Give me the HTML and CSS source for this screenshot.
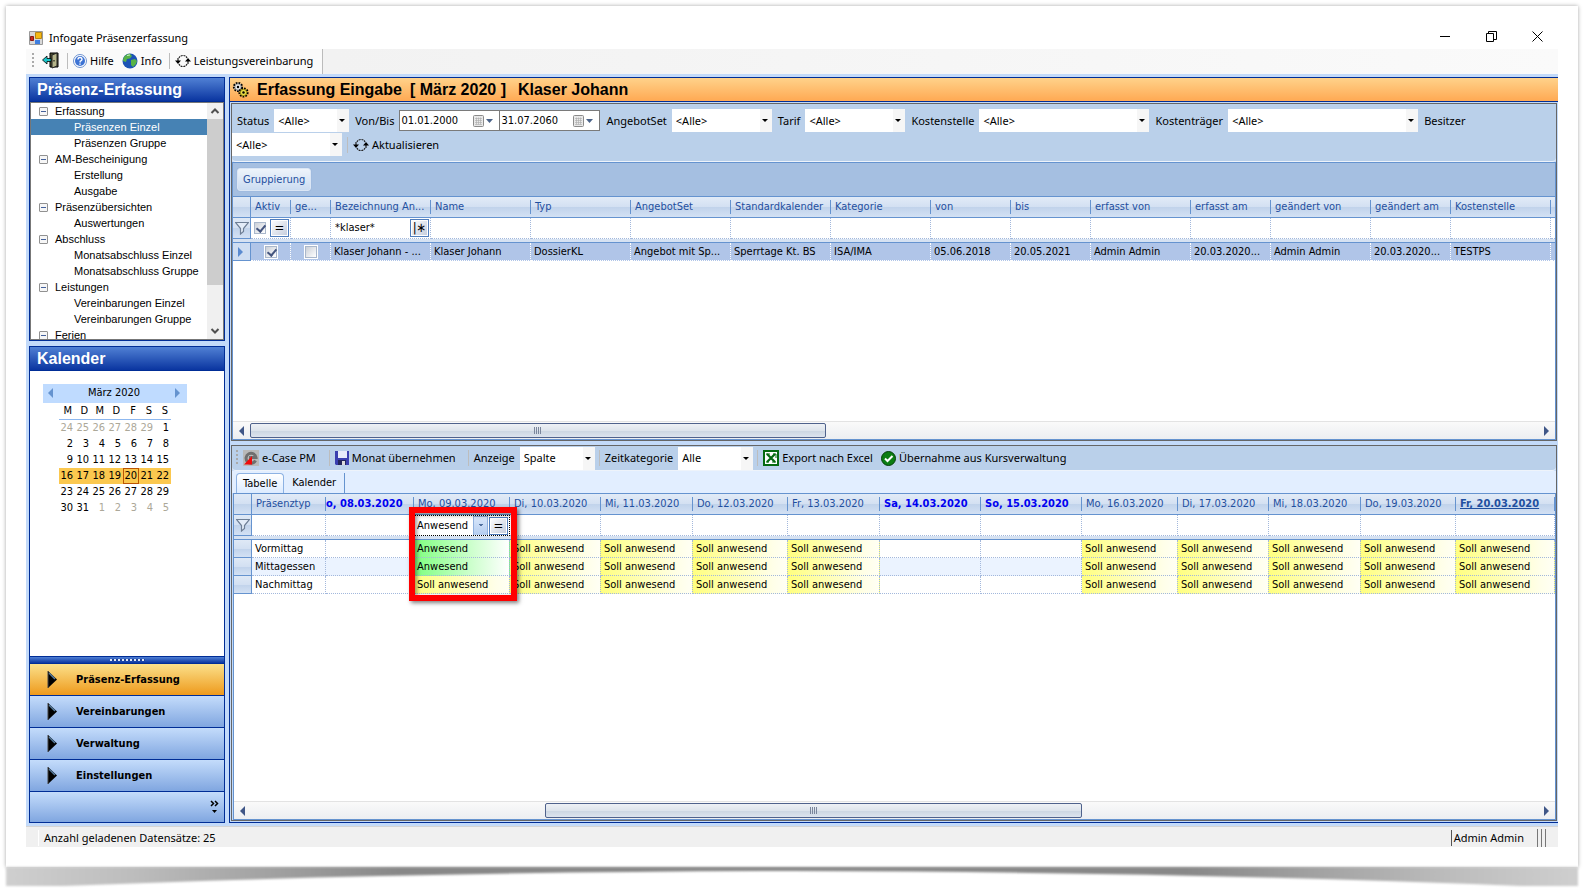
FILE: index.html
```
<!DOCTYPE html>
<html lang="de">
<head>
    <meta charset="UTF-8">
    <meta name="viewport" content="width=device-width, initial-scale=1.0">
    <title>Infogate Präsenzerfassung</title>
    <link rel="stylesheet" href="styles.css">
</head>
<body>
    <!-- shared symbols -->
    <svg class="symbols" aria-hidden="true">
        <symbol id="refresh" viewBox="0 0 16 14">
            <path d="M4 4 Q5 1.5 8 1.5 Q11 1.5 12 4 M12 10 Q11 12.500 8 12.500 Q5 12.500 4 10" fill="none" stroke="#222" stroke-width="1.200" stroke-dasharray="2 .7"/>
            <path d="M3 4v3M13 7v3" stroke="#222" stroke-width="1.200"/>
            <path d="M0 6.500h6L3 10zM10 7.500h6L13 4z" fill="#000"/>
        </symbol>
        <symbol id="nav-arrow" viewBox="0 0 12 20">
            <path d="M1 1 10 9.500 1 18z" fill="#000"/>
            <path d="M2 3 8 9" stroke="#557a9c" stroke-width="1.500"/>
            <path d="M1 1v17" stroke="#444"/>
        </symbol>
        <symbol id="funnel" viewBox="0 0 14 14">
            <path d="M.5 1.500h13L8.500 7.500v3l-3 2.500V7.500z" fill="#e3ecf8" stroke="#6e7f96" stroke-width="1.200"/>
        </symbol>
        <symbol id="cal-button" viewBox="0 0 20 12">
            <rect x=".5" y=".5" width="10" height="11" rx="1" fill="#e9e9e9" stroke="#8a8a8a"/>
            <path d="M2 3.500h7M2 5.500h7M2 7.500h7M2 9.500h7M3.500 2.500v7M5.500 2.500v7M7.500 2.500v7" stroke="#aaa" stroke-width=".6"/>
            <path d="M13 4h7l-3.500 4z" fill="#4a6288"/>
        </symbol>
    </svg>

    <div class="sheet">
        <div class="app">
            <div class="titlebar">
                <svg class="app-icon" viewBox="0 0 14 14">
                    <path fill="#d8d8d8" stroke="#999" d="M.5.5h13v13H.5z"/>
                    <path fill="#f5b914" stroke="#b88612" d="M6.500 1.500h6v6h-6z"/>
                    <path fill="#c8281e" stroke="#8d1810" d="M1.500 5.500h3v4h-3z"/>
                    <path fill="#3f7fe0" d="M6 9h5v4H6z"/>
                </svg>
                <span class="title">Infogate Präsenzerfassung</span>
                <div class="win-buttons">
                    <button aria-label="Minimieren"><svg viewBox="0 0 11 11"><path d="M0 5.500h10"/></svg></button>
                    <button aria-label="Wiederherstellen"><svg viewBox="0 0 11 11"><path d="M.5 2.500h7v8h-7zM2.500 2.500v-2h8v8h-3"/></svg></button>
                    <button aria-label="Schliessen"><svg viewBox="0 0 11 11"><path d="M.5.5l10 10M10.500.5l-10 10"/></svg></button>
                </div>
            </div>

            <div class="menubar">
                <div class="strip">
                    <span class="grip"></span>
                    <button class="tool" aria-label="Beenden">
                        <svg width="18" height="17" viewBox="0 0 18 17">
                            <path d="M8 1h8v14H8z" fill="#4c4c30" stroke="#000"/>
                            <path d="M10 3l5-2v13l-5 2z" fill="#b5b58a" stroke="#222"/>
                            <path d="M12 8v1.500" stroke="#000"/>
                            <path d="M.5 8 5 4v2.500h4v3H5V12z" fill="#19c5c9" stroke="#000" stroke-width=".8"/>
                        </svg>
                    </button>
                    <span class="sep"></span>
                    <button class="tool">
                        <svg width="14" height="14" viewBox="0 0 14 14">
                            <circle cx="7" cy="7" r="6.500" fill="#fff" stroke="#6f93cf"/>
                            <circle cx="7" cy="7" r="5" fill="#3d73d4"/>
                            <path d="M5 5.500Q5 3.500 7 3.500T9 5.500Q9 6.500 7.200 7.300V8.500M7 9.500v1.300" fill="none" stroke="#fff" stroke-width="1.400"/>
                        </svg>
                        Hilfe
                    </button>
                    <button class="tool">
                        <svg width="16" height="16" viewBox="0 0 16 16">
                            <circle cx="8" cy="8" r="7.500" fill="#1c53b5"/>
                            <path d="M2 4Q4 1 8 .8L10 3 8 5.500 5 6 4 9 1 8Q1 6 2 4zM9 7l4-1 2 2-1 3-3 3-2-2z" fill="#57b347"/>
                            <path d="M5 2.500 8 2" stroke="#cdf0c6"/>
                        </svg>
                        Info
                    </button>
                    <span class="sep"></span>
                    <button class="tool"><svg width="16" height="14"><use href="#refresh"/></svg>Leistungsvereinbarung</button>
                </div>
            </div>

            <div class="workspace">
                <aside class="sidebar">
                    <section class="side-panel tree-panel">
                        <h2>Präsenz-Erfassung</h2>
                        <div class="tree-box">
                            <ul class="tree">
                                <li class="root"><i></i>Erfassung</li>
                                <li class="selected">Präsenzen Einzel</li>
                                <li>Präsenzen Gruppe</li>
                                <li class="root"><i></i>AM-Bescheinigung</li>
                                <li>Erstellung</li>
                                <li>Ausgabe</li>
                                <li class="root"><i></i>Präsenzübersichten</li>
                                <li>Auswertungen</li>
                                <li class="root"><i></i>Abschluss</li>
                                <li>Monatsabschluss Einzel</li>
                                <li>Monatsabschluss Gruppe</li>
                                <li class="root"><i></i>Leistungen</li>
                                <li>Vereinbarungen Einzel</li>
                                <li>Vereinbarungen Gruppe</li>
                                <li class="root"><i></i>Ferien</li>
                            </ul>
                            <div class="vscroll">
                                <svg viewBox="0 0 15 16"><path d="M4 10l3.500-3.500L11 10"/></svg>
                                <span class="vthumb"></span>
                                <svg viewBox="0 0 15 16"><path d="M4 6l3.500 3.500L11 6"/></svg>
                            </div>
                        </div>
                    </section>

                    <section class="side-panel calendar-panel">
                        <h2>Kalender</h2>
                        <div class="calendar">
                            <div class="cal-head">
                                <button class="prev" aria-label="Vorheriger Monat"></button>
                                <span>März 2020</span>
                                <button class="next" aria-label="Nächster Monat"></button>
                            </div>
                            <table class="cal-days">
                                <thead>
                                    <tr><th>M</th><th>D</th><th>M</th><th>D</th><th>F</th><th>S</th><th>S</th></tr>
                                </thead>
                                <tbody>
                                    <tr><td class="off">24</td><td class="off">25</td><td class="off">26</td><td class="off">27</td><td class="off">28</td><td class="off">29</td><td>1</td></tr>
                                    <tr><td>2</td><td>3</td><td>4</td><td>5</td><td>6</td><td>7</td><td>8</td></tr>
                                    <tr><td>9</td><td>10</td><td>11</td><td>12</td><td>13</td><td>14</td><td>15</td></tr>
                                    <tr class="week"><td>16</td><td>17</td><td>18</td><td>19</td><td class="today">20</td><td>21</td><td>22</td></tr>
                                    <tr><td>23</td><td>24</td><td>25</td><td>26</td><td>27</td><td>28</td><td>29</td></tr>
                                    <tr><td>30</td><td>31</td><td class="off">1</td><td class="off">2</td><td class="off">3</td><td class="off">4</td><td class="off">5</td></tr>
                                </tbody>
                            </table>
                        </div>
                        <div class="splitter"><span></span></div>
                        <nav class="side-nav">
                            <button class="active"><svg><use href="#nav-arrow"/></svg>Präsenz-Erfassung</button>
                            <button><svg><use href="#nav-arrow"/></svg>Vereinbarungen</button>
                            <button><svg><use href="#nav-arrow"/></svg>Verwaltung</button>
                            <button><svg><use href="#nav-arrow"/></svg>Einstellungen</button>
                            <div class="nav-more">
                                <svg width="9" height="14" viewBox="0 0 9 14"><path d="M1 1l2.500 2.500L1 6M5 1l2.500 2.500L5 6" fill="none" stroke="#000" stroke-width="1.500"/><path d="M2 10h5l-2.500 3z"/></svg>
                            </div>
                        </nav>
                    </section>
                </aside>

                <main class="main">
                    <h1>
                        <svg width="17" height="17" viewBox="0 0 17 17">
                            <circle cx="6" cy="6" r="4" fill="#ddd" stroke="#000" stroke-width="2.200" stroke-dasharray="1.600 1.100"/>
                            <circle cx="6" cy="6" r="3.200" fill="#e8e8e8" stroke="#555" stroke-width=".6"/>
                            <circle cx="6" cy="6" r="1.200"/>
                            <circle cx="11.500" cy="11.500" r="4" fill="#e8d21e" stroke="#000" stroke-width="2.200" stroke-dasharray="1.600 1.100"/>
                            <circle cx="11.500" cy="11.500" r="3.200" fill="#efe04a" stroke="#6b6000" stroke-width=".6"/>
                            <circle cx="11.500" cy="11.500" r="1.200"/>
                        </svg>
                        <span>Erfassung Eingabe</span><span>[ März 2020 ]</span><span>Klaser Johann</span>
                    </h1>

                    <section class="pane upper">
                        <div class="filters">
                            <label for="status">Status</label>
                            <span class="combo w75"><select id="status"><option>&lt;Alle&gt;</option></select></span>
                            <label for="von">Von/Bis</label>
                            <span class="dates">
                                <span class="date"><input id="von" type="text" value="01.01.2000"><svg><use href="#cal-button"/></svg></span>
                                <span class="date"><input type="text" aria-label="Bis" value="31.07.2060"><svg><use href="#cal-button"/></svg></span>
                            </span>
                            <label for="set">AngebotSet</label>
                            <span class="combo w100"><select id="set"><option>&lt;Alle&gt;</option></select></span>
                            <label for="tarif">Tarif</label>
                            <span class="combo w100"><select id="tarif"><option>&lt;Alle&gt;</option></select></span>
                            <label for="stelle">Kostenstelle</label>
                            <span class="combo w170"><select id="stelle"><option>&lt;Alle&gt;</option></select></span>
                            <label for="traeger">Kostenträger</label>
                            <span class="combo w190"><select id="traeger"><option>&lt;Alle&gt;</option></select></span>
                            <label for="besitzer">Besitzer</label>
                            <span class="line-break"></span>
                            <span class="combo w110"><select id="besitzer"><option>&lt;Alle&gt;</option></select></span>
                            <span class="sep"></span>
                            <button class="tool"><svg width="16" height="14"><use href="#refresh"/></svg>Aktualisieren</button>
                        </div>
                        <div class="grid-box">
                            <div class="group-bar"><button class="chip">Gruppierung</button></div>
                            <div class="grid-scroll">
                                <table class="grid">
                                    <colgroup>
                                        <col class="c18"><col class="c40"><col class="c40"><col class="c100"><col class="c100"><col class="c100"><col class="c100"><col class="c100"><col class="c100"><col class="c80"><col class="c80"><col class="c100"><col class="c80"><col class="c100"><col class="c80"><col class="c100"><col>
                                    </colgroup>
                                    <thead>
                                        <tr>
                                            <th class="rowhead"></th><th>Aktiv</th><th>ge...</th><th>Bezeichnung An...</th><th>Name</th><th>Typ</th><th>AngebotSet</th><th>Standardkalender</th><th>Kategorie</th><th>von</th><th>bis</th><th>erfasst von</th><th>erfasst am</th><th>geändert von</th><th>geändert am</th><th>Kostenstelle</th><th class="rest"></th>
                                        </tr>
                                    </thead>
                                    <tbody>
                                        <tr class="filter-row">
                                            <td class="rowhead"><svg width="14" height="14"><use href="#funnel"/></svg></td>
                                            <td><div class="filter-cell"><input type="checkbox" aria-label="Filter Aktiv" checked><button class="op">=</button></div></td>
                                            <td></td>
                                            <td><div class="filter-cell"><input type="text" aria-label="Filter Bezeichnung" value="*klaser*"><button class="op">|∗</button></div></td>
                                            <td></td><td></td><td></td><td></td><td></td><td></td><td></td><td></td><td></td><td></td><td></td><td></td><td class="rest"></td>
                                        </tr>
                                        <tr class="band"><td colspan="17"></td></tr>
                                        <tr class="current">
                                            <td class="rowhead"><span class="marker"></span></td>
                                            <td class="center"><input type="checkbox" aria-label="Aktiv" checked></td>
                                            <td class="center"><input type="checkbox" aria-label="gesperrt"></td>
                                            <td>Klaser Johann - ...</td><td>Klaser Johann</td><td>DossierKL</td><td>Angebot mit Sp...</td><td>Sperrtage Kt. BS</td><td>ISA/IMA</td><td>05.06.2018</td><td>20.05.2021</td><td>Admin Admin</td><td>20.03.2020...</td><td>Admin Admin</td><td>20.03.2020...</td><td>TESTPS</td><td class="rest"></td>
                                        </tr>
                                    </tbody>
                                </table>
                            </div>
                            <div class="hscroll">
                                <span class="left"></span>
                                <div class="track"><span class="thumb thumb-upper"></span></div>
                                <span class="right"></span>
                            </div>
                        </div>
                    </section>

                    <section class="pane lower">
                        <div class="toolbar">
                            <span class="grip"></span>
                            <button class="tool">
                                <svg width="16" height="16" viewBox="0 0 16 16">
                                    <path d="M0 0h16v16H0z" fill="#b9b9b9"/>
                                    <path d="M12.500 10.500A5 5 0 1 1 13 7.500H6" fill="none" stroke="#6f6f6f" stroke-width="3"/>
                                    <path d="M9 6v8.500H1z" fill="#f00a0a"/>
                                </svg>
                                e-Case PM
                            </button>
                            <span class="sep"></span>
                            <button class="tool">
                                <svg width="14" height="14" viewBox="0 0 14 14">
                                    <path d="M0 0h14v14H1L0 13z" fill="#3a3fb0"/>
                                    <path d="M3 0h9v7H3z" fill="#e6ebfa"/>
                                    <path d="M3 9h8v5H3z" fill="#23255c"/>
                                    <path d="M7 10h3v4H7z" fill="#dcdcdc"/>
                                </svg>
                                Monat übernehmen
                            </button>
                            <span class="sep"></span>
                            <label for="anzeige">Anzeige</label>
                            <span class="combo w75"><select id="anzeige"><option>Spalte</option></select></span>
                            <span class="sep"></span>
                            <label for="zeit">Zeitkategorie</label>
                            <span class="combo w75"><select id="zeit"><option>Alle</option></select></span>
                            <span class="sep"></span>
                            <button class="tool">
                                <svg width="16" height="16" viewBox="0 0 16 16">
                                    <path d="M1 1h14v14H1z" fill="#fff" stroke="#05690f" stroke-width="2"/>
                                    <path d="M4 4l8 8M12 4l-8 8" stroke="#05690f" stroke-width="2.200"/>
                                    <path d="M3 4h4M9 12h4M3 12h3M10 4h3v4" fill="none" stroke="#05690f"/>
                                </svg>
                                Export nach Excel
                            </button>
                            <button class="tool">
                                <svg width="15" height="15" viewBox="0 0 15 15">
                                    <circle cx="7.500" cy="7.500" r="7" fill="#0b7d12" stroke="#053d08"/>
                                    <path d="M4 7.500 6.500 10 11.500 5" fill="none" stroke="#fff" stroke-width="2"/>
                                </svg>
                                Übernahme aus Kursverwaltung
                            </button>
                        </div>
                        <div class="tabs">
                            <button class="tab active">Tabelle</button>
                            <button class="tab">Kalender</button>
                        </div>
                        <div class="grid-box presence">
                            <div class="grid-scroll">
                                <table class="grid">
                                    <colgroup>
                                        <col class="c18"><col class="c74"><col class="c88"><col class="c96"><col class="c91"><col class="c92"><col class="c95"><col class="c92"><col class="c101"><col class="c101"><col class="c96"><col class="c91"><col class="c92"><col class="c95"><col>
                                    </colgroup>
                                    <thead>
                                        <tr>
                                            <th class="rowhead"></th><th>Präsenztyp</th>
                                            <th class="weekend cut">o, 08.03.2020</th>
                                            <th class="marked">Mo, 09.03.2020<span class="highlight"></span></th>
                                            <th>Di, 10.03.2020</th><th>Mi, 11.03.2020</th><th>Do, 12.03.2020</th><th>Fr, 13.03.2020</th>
                                            <th class="weekend">Sa, 14.03.2020</th><th class="weekend">So, 15.03.2020</th>
                                            <th>Mo, 16.03.2020</th><th>Di, 17.03.2020</th><th>Mi, 18.03.2020</th><th>Do, 19.03.2020</th>
                                            <th class="now">Fr, 20.03.2020</th>
                                        </tr>
                                    </thead>
                                    <tbody>
                                        <tr class="filter-row">
                                            <td class="rowhead"><svg width="14" height="14"><use href="#funnel"/></svg></td>
                                            <td></td><td></td>
                                            <td class="editing"><div class="filter-cell"><span class="drop"><select aria-label="Filter Mo, 09.03.2020"><option>Anwesend</option></select></span><button class="op">=</button></div></td>
                                            <td></td><td></td><td></td><td></td><td></td><td></td><td></td><td></td><td></td><td></td><td></td>
                                        </tr>
                                        <tr class="band"><td colspan="15"></td></tr>
                                        <tr>
                                            <td class="rowhead"></td><td>Vormittag</td><td></td><td class="ist">Anwesend</td><td class="soll">Soll anwesend</td><td class="soll">Soll anwesend</td><td class="soll">Soll anwesend</td><td class="soll">Soll anwesend</td><td></td><td></td><td class="soll">Soll anwesend</td><td class="soll">Soll anwesend</td><td class="soll">Soll anwesend</td><td class="soll">Soll anwesend</td><td class="soll">Soll anwesend</td>
                                        </tr>
                                        <tr class="alt">
                                            <td class="rowhead"></td><td>Mittagessen</td><td></td><td class="ist">Anwesend</td><td class="soll">Soll anwesend</td><td class="soll">Soll anwesend</td><td class="soll">Soll anwesend</td><td class="soll">Soll anwesend</td><td></td><td></td><td class="soll">Soll anwesend</td><td class="soll">Soll anwesend</td><td class="soll">Soll anwesend</td><td class="soll">Soll anwesend</td><td class="soll">Soll anwesend</td>
                                        </tr>
                                        <tr>
                                            <td class="rowhead"></td><td>Nachmittag</td><td></td><td class="soll">Soll anwesend</td><td class="soll">Soll anwesend</td><td class="soll">Soll anwesend</td><td class="soll">Soll anwesend</td><td class="soll">Soll anwesend</td><td></td><td></td><td class="soll">Soll anwesend</td><td class="soll">Soll anwesend</td><td class="soll">Soll anwesend</td><td class="soll">Soll anwesend</td><td class="soll">Soll anwesend</td>
                                        </tr>
                                    </tbody>
                                </table>
                            </div>
                            <div class="hscroll">
                                <span class="left"></span>
                                <div class="track"><span class="thumb thumb-lower"></span></div>
                                <span class="right"></span>
                            </div>
                        </div>
                    </section>
                </main>
            </div>

            <footer class="statusbar">
                <span class="count">Anzahl geladenen Datensätze: 25</span>
                <span class="user">Admin Admin</span>
                <span class="bars"></span>
            </footer>
        </div>
    </div>
    <!-- curled paper shadow under the sheet -->
    <svg class="curl" viewBox="0 0 1580 24" preserveAspectRatio="none">
        <defs>
            <linearGradient id="curl-fill">
                <stop offset="0" stop-color="#cfcfcf"/>
                <stop offset=".08" stop-color="#bdbdbd"/>
                <stop offset=".25" stop-color="#888"/>
                <stop offset=".75" stop-color="#888"/>
                <stop offset=".92" stop-color="#bdbdbd"/>
                <stop offset="1" stop-color="#cfcfcf"/>
            </linearGradient>
        </defs>
        <path d="M2 -4V19H60Q400 5 790 4Q1180 5 1520 19H1578V-4z" fill="url(#curl-fill)"/>
    </svg>
</body>
</html>
```
FILE: styles.css
```
* {
    box-sizing: border-box;
}
body {
    margin: 0;
    padding: 6px 14px 5px 6px;
    min-height: 100vh;
    display: flex;
    flex-direction: column;
    background: #fff;
    color: #000;
    font: 11px/16px "Noto Sans", "Open Sans", sans-serif;
    overflow-x: hidden;
}
.symbols {
    display: none;
}
button, input, select {
    font: inherit;
    color: inherit;
    margin: 0;
    padding: 0;
    border: none;
    background: none;
}
h1, h2, ul {
    margin: 0;
    padding: 0;
}
.sheet {
    flex: 1;
    display: flex;
    padding: 20px;
    background: #fff;
    box-shadow: 0 0 4px rgba(0, 0, 0, 0.35);
    position: relative;
}
.curl {
    height: 24px;
    margin: 0 -2px;
    filter: blur(1px);
}
.app {
    flex: 1;
    min-width: 0;
    display: flex;
    flex-direction: column;
}

/* title bar and main menu */
.titlebar {
    display: flex;
    align-items: center;
    height: 23px;
    padding-left: 3px;
}
.app-icon {
    width: 14px;
    height: 14px;
    margin-right: 6px;
}
.title {
    flex: 1;
}
.win-buttons {
    display: flex;
    gap: 4px;
    align-self: flex-start;
}
.win-buttons button {
    width: 42px;
    height: 20px;
}
.win-buttons svg {
    display: block;
    width: 11px;
    height: 11px;
    margin: auto;
    fill: none;
    stroke: #000;
}
.menubar {
    display: flex;
    height: 25px;
    background: linear-gradient(90deg, #f0f0f0, #fafafa);
}
.strip {
    display: flex;
    align-items: center;
    padding: 0 9px 2px 6px;
    background: #fafafa;
    border-right: 1px solid #bbb;
}
.grip {
    width: 2px;
    height: 16px;
    background: repeating-linear-gradient(#aaa 0 2px, transparent 2px 4px);
}
.sep {
    width: 1px;
    height: 16px;
    background: #bdbdbd;
}
.tool {
    display: flex;
    align-items: center;
    gap: 3px;
    white-space: nowrap;
}
.strip .tool {
    margin-left: 8px;
}
.strip .sep {
    margin-left: 7px;
}
.strip .sep + .tool {
    margin-left: 5px;
}

/* sidebar */
.workspace {
    flex: 1;
    display: flex;
    background: #c3daf9;
    padding-bottom: 3px;
    border-bottom: 1px solid #d5d5d5;
}
.sidebar {
    flex: none;
    width: 203px;
    padding: 3px 4px 0 3px;
    display: flex;
    flex-direction: column;
    gap: 5px;
}
.side-panel {
    display: flex;
    flex-direction: column;
    border: 1px solid #002d96;
    background: #fff;
    min-height: 0;
}
.side-panel h2 {
    height: 24px;
    flex: none;
    padding-left: 7px;
    background: linear-gradient(#5080d4, #0a35a0);
    border-bottom: 1px solid #002d96;
    color: #fff;
    font: bold 16px/23px "Liberation Sans", Arial, sans-serif;
}
.tree-panel {
    flex: 11 1 0;
}
.calendar-panel {
    flex: 20 1 0;
}
.tree-box {
    flex: 1;
    min-height: 0;
    display: flex;
    overflow: hidden;
    border: 1px solid #777;
}
.tree {
    flex: 1;
    list-style: none;
    font: 11px/16px "Liberation Sans", Arial, sans-serif;
}
.tree li {
    display: flex;
    align-items: center;
    height: 16px;
    padding-left: 43px;
    white-space: nowrap;
}
.tree .root {
    padding-left: 8px;
    gap: 7px;
}
.tree i {
    width: 9px;
    height: 9px;
    border: 1px solid #919191;
    border-radius: 1px;
    background: linear-gradient(#44619c, #44619c) center / 5px 1px no-repeat #f6f6f6;
}
.tree .selected {
    background: #4682b4;
    color: #fff;
}
.vscroll {
    width: 16px;
    display: flex;
    flex-direction: column;
    background: #f0f0f0;
}
.vscroll svg {
    height: 16px;
    flex: none;
    fill: none;
    stroke: #505050;
    stroke-width: 2;
}
.vthumb {
    flex: 0 1 166px;
    margin-bottom: auto;
    background: #cdcdcd;
}
.calendar {
    flex: 1;
    padding: 13px;
    font: 11px/16px "DejaVu Sans Condensed", Tahoma, sans-serif;
}
.cal-head {
    display: flex;
    align-items: center;
    justify-content: space-between;
    width: 144px;
    height: 19px;
    padding: 0 7px 0 5px;
    background: #bfdbff;
}
.prev, .next {
    width: 0;
    height: 0;
    border: 5px solid transparent;
}
.prev {
    border-left: 0;
    border-right-color: #6593cf;
}
.next {
    border-right: 0;
    border-left-color: #6593cf;
}
.cal-days {
    margin-left: 16px;
    border-collapse: collapse;
    table-layout: fixed;
    width: 112px;
}
.cal-days th {
    height: 17px;
    padding: 0 3px 0 0;
    border-bottom: 1px solid #8db8f0;
    font-weight: normal;
    text-align: right;
}
.cal-days td {
    height: 16px;
    padding: 0 2px 0 0;
    line-height: 15px;
    text-align: right;
}
.cal-days .off {
    color: #aca899;
}
.week {
    background: #fbc84f;
}
.today {
    outline: 1px solid #bb5503;
    outline-offset: -1px;
}
.splitter {
    height: 8px;
    flex: none;
    background: linear-gradient(#4f7fd3, #0a35a0);
    border: solid #002d96;
    border-width: 1px 0;
}
.splitter span {
    display: block;
    width: 35px;
    height: 2px;
    margin: 2px auto;
    background: repeating-linear-gradient(90deg, #dfe8f8 0 2px, #1c3f94 2px 4px);
}
.side-nav button {
    display: flex;
    align-items: center;
    gap: 17px;
    width: 100%;
    height: 32px;
    padding-left: 17px;
    border-bottom: 1px solid #002d96;
    background: linear-gradient(#c4dcfb, #80a6e0);
    font: bold 11px/16px "DejaVu Sans Condensed", Tahoma, sans-serif;
}
.side-nav .active {
    background: linear-gradient(#fbe08b, #ee9a1c);
}
.side-nav button svg {
    width: 12px;
    height: 20px;
}
.nav-more {
    display: flex;
    align-items: center;
    justify-content: flex-end;
    height: 30px;
    padding-right: 5px;
    background: linear-gradient(#c4dcfb, #80a6e0);
}

/* content area */
.main {
    flex: 1;
    min-width: 0;
    display: flex;
    flex-direction: column;
    margin-top: 3px;
    border: solid #002d96;
    border-width: 1px 0 1px 1px;
}
.main h1 {
    display: flex;
    align-items: center;
    gap: 8px;
    flex: none;
    height: 24px;
    padding-left: 2px;
    background: linear-gradient(#ffd28a, #ffa953);
    border-bottom: 1px solid #002d96;
    font: bold 16px/23px "Liberation Sans", Arial, sans-serif;
}
.main h1 span + span + span {
    margin-left: 4px;
}
.pane {
    min-height: 0;
    margin: 1px;
    border: 1px solid #666;
    display: flex;
    flex-direction: column;
}
.upper {
    flex: 9 1 0;
}
.lower {
    flex: 10 1 0;
    margin-top: 3px;
}
.filters, .toolbar {
    display: flex;
    align-items: center;
    background: #bad0ea;
    border-bottom: 1px solid #eef3fa;
    border-radius: 0 0 4px 4px;
}
.filters {
    flex-wrap: wrap;
    gap: 0 5px;
    padding: 5px 0;
}
.filters label {
    padding-left: 1px;
}
.filters label:first-child {
    padding-left: 5px;
}
.line-break {
    flex-basis: 100%;
    height: 1px;
}
.filters .tool {
    gap: 3px;
}
.combo {
    display: inline-grid;
    height: 23px;
    background: linear-gradient(90deg, transparent calc(100% - 12px), #f6f6f6 0) #fff;
}
.combo select {
    grid-area: 1 / 1;
    appearance: none;
    padding-left: 4px;
}
.combo::after {
    content: "";
    grid-area: 1 / 1;
    align-self: center;
    justify-self: end;
    margin-right: 4px;
    border: 3px solid transparent;
    border-top-color: #000;
    border-bottom: 0;
    pointer-events: none;
}
.w75 { width: 75px; }
.w100 { width: 100px; }
.w110 { width: 110px; }
.w170 { width: 170px; }
.w190 { width: 190px; }
.dates {
    display: flex;
    height: 21px;
    border: 1px solid #7a7a7a;
    background: #fff;
}
.date {
    display: flex;
    align-items: center;
    width: 99px;
    padding: 0 6px 0 1px;
}
.date + .date {
    border-left: 1px solid #7a7a7a;
    width: 100px;
}
.date input {
    flex: 1;
    min-width: 0;
    font-family: "DejaVu Sans Condensed", Tahoma, sans-serif;
}
.date svg {
    width: 20px;
    height: 12px;
}
.toolbar {
    flex: none;
    height: 25px;
    padding-left: 4px;
    gap: 5px;
}
.toolbar .grip + .tool {
    margin-right: 4px;
}
.toolbar .tool + .sep {
    margin-left: 4px;
}
.toolbar .combo + .sep {
    margin-left: -1px;
}
.toolbar .tool {
    margin-right: 3px;
}

/* grids */
.grid-box {
    flex: 1;
    min-height: 0;
    display: flex;
    flex-direction: column;
    border: 1px solid #6593cf;
    background: #fff;
    font-family: "DejaVu Sans Condensed", Tahoma, sans-serif;
}
.presence {
    margin-left: 1px;
}
.group-bar {
    flex: none;
    height: 34px;
    padding: 5px 4px;
    background: #a5bfe1;
    border-bottom: 1px solid #6593cf;
}
.chip {
    display: block;
    height: 23px;
    padding: 0 5px;
    border: 1px solid #dbe6f5;
    border-radius: 3px;
    background: linear-gradient(#eef4fb, #cbdcf1);
    color: #1f4f9f;
    box-shadow: 0 0 1px #7f9cc6;
}
.grid-scroll {
    flex: 1;
    min-height: 0;
    overflow: hidden;
}
.grid {
    width: 100%;
    table-layout: fixed;
    border-collapse: separate;
    border-spacing: 0;
}
.c18 { width: 18px; }
.c40 { width: 40px; }
.c74 { width: 74px; }
.c80 { width: 80px; }
.c88 { width: 88px; }
.c91 { width: 91px; }
.c92 { width: 92px; }
.c95 { width: 95px; }
.c96 { width: 96px; }
.c100 { width: 100px; }
.c101 { width: 101px; }
.grid th {
    height: 21px;
    padding: 0 0 0 4px;
    background:
        linear-gradient(#6593cf, #6593cf) right center / 1px 14px no-repeat,
        linear-gradient(#e2ebf7, #d3e0f2 50%, #c1d3eb 52%, #d3e1f4);
    border-bottom: 1px solid #6593cf;
    color: #1f4f9f;
    font-weight: normal;
    line-height: 16px;
    text-align: left;
    white-space: nowrap;
}
.grid .rowhead {
    padding: 0;
    border-right: 1px solid #6593cf;
    border-bottom: 1px solid #6593cf;
    background: linear-gradient(#dfe9f6, #d3e0f2 50%, #c1d3eb 52%, #d3e1f4);
}
.rowhead svg {
    display: block;
    margin: auto;
}
.grid td {
    height: 18px;
    padding: 0 0 0 3px;
    border-right: 1px dotted #a3b8dc;
    border-bottom: 1px dotted #a3b8dc;
    line-height: 16px;
    white-space: nowrap;
    overflow: hidden;
}
.grid .rest {
    padding: 0;
    border-right: 0;
    background-image: none;
}
.grid th.rest {
    background: linear-gradient(#e2ebf7, #d3e0f2 50%, #c1d3eb 52%, #d3e1f4);
}
.grid .weekend {
    color: #0000f0;
    font-weight: bold;
}
.grid .cut {
    padding-left: 0;
}
.grid .now {
    font-weight: bold;
    text-decoration: underline;
}
.grid .filter-row td {
    height: 21px;
}
.grid .band td {
    height: 4px;
    padding: 0;
    background: #d6e2f2;
    border: none;
    border-bottom: 1px solid #6593cf;
}
.grid .current td {
    background: #b0c5e8;
    border-color: #fff;
}
.grid .current .rowhead {
    background: #cfdef2;
    border-color: #6593cf;
}
.grid .alt td:not(.rowhead) {
    background-color: #ebf3ff;
}
.grid .soll {
    background: linear-gradient(90deg, #ffff80, #ffffe8 85%, #fffff4);
}
.grid .ist {
    background: linear-gradient(90deg, #80ff80, #fff);
}
.grid .center {
    padding: 0;
    text-align: center;
    line-height: 0;
}
.marker {
    display: block;
    width: 5px;
    margin-left: 5px;
    border: 5px solid transparent;
    border-left-color: #5b8bd0;
    border-right: 0;
}
.filter-cell {
    display: flex;
    align-items: center;
    height: 19px;
    gap: 1px;
    margin-right: 1px;
}
.filter-cell input[type="text"] {
    flex: 1;
    min-width: 0;
    padding-left: 1px;
}
.grid input[type="checkbox"] {
    appearance: none;
    flex: none;
    width: 12px;
    height: 12px;
    border: 1px solid #a9b7cb;
    outline: 1px solid #fff;
    background: linear-gradient(135deg, #cbd0d8, #fff);
    vertical-align: middle;
}
.grid input[type="checkbox"]:checked::before {
    content: "";
    display: block;
    width: 4px;
    height: 7px;
    margin: 0 0 0 3px;
    border: solid #44557f;
    border-width: 0 2px 2px 0;
    transform: rotate(40deg);
}
.filter-cell input[type="checkbox"] {
    margin-right: 3px;
}
.op {
    flex: none;
    width: 19px;
    height: 18px;
    border: 1px solid #4f7dbd;
    outline: 1px solid #fff;
    outline-offset: -2px;
    background: linear-gradient(135deg, #fff, #c3cbdc);
    font-size: 13px;
    line-height: 14px;
}
.grid .editing {
    border: 1px dotted #000;
    border-left: 0;
    padding-left: 3px;
}
.drop {
    flex: 1;
    display: grid;
    min-width: 0;
}
.drop select {
    grid-area: 1 / 1;
    appearance: none;
}
.drop::after {
    content: "";
    grid-area: 1 / 1;
    justify-self: end;
    width: 13px;
    height: 18px;
    background: conic-gradient(from -45deg at 50% 100%, #4f6f9f 90deg, transparent 0) center / 6px 3px no-repeat, linear-gradient(#d8e6fa, #b4cdf0);
    border: 1px solid #8fb0de;
    pointer-events: none;
}
.marked {
    position: relative;
}
.highlight {
    position: absolute;
    z-index: 1;
    top: 13px;
    left: -5px;
    right: -7px;
    height: 94px;
    border: 6px solid #f00;
    box-shadow: 2px 2px 4px rgba(0, 0, 0, 0.5), inset 2px 2px 4px rgba(0, 0, 0, 0.4);
    pointer-events: none;
}
.hscroll {
    flex: none;
    display: flex;
    align-items: center;
    height: 18px;
    padding: 1px 6px;
    background: linear-gradient(#fafafa, #eceef1);
    border-top: 1px solid #e3e3e3;
}
.left, .right {
    border: 5px solid transparent;
}
.left {
    border-left: 0;
    border-right-color: #3f5687;
}
.right {
    border-right: 0;
    border-left-color: #3f5687;
}
.track {
    flex: 1;
    display: flex;
    margin: 0 14px 0 6px;
}
.thumb {
    height: 15px;
    border: 1px solid #4f628c;
    border-radius: 2px;
    background:
        repeating-linear-gradient(90deg, #7a869c 0 1px, transparent 1px 2px) center / 8px 7px no-repeat,
        linear-gradient(#eef1f5, #dde4ec 50%, #ccd6e2 55%, #dce4ee);
}
.thumb-upper {
    width: 45%;
}
.thumb-lower {
    width: 42%;
    margin-left: 23%;
}
.tabs {
    flex: none;
    display: flex;
    align-items: flex-end;
    height: 22px;
    padding-left: 4px;
    background: #e2eeff;
    font-family: "DejaVu Sans Condensed", Tahoma, sans-serif;
}
.tab {
    height: 20px;
    padding: 0 8px;
    border-right: 1px solid #6593cf;
}
.tab.active {
    padding: 0 6px;
    border: 1px solid #8db2e3;
    border-bottom: 0;
    border-radius: 4px 4px 0 0;
    background: linear-gradient(#fff, #dcebff);
}

/* status bar */
.statusbar {
    flex: none;
    display: flex;
    align-items: center;
    height: 20px;
    padding: 2px 0 0 12px;
    background: #f0f0f0;
}
.count {
    flex: 1;
    padding-left: 5px;
    border-left: 1px solid #fff;
}
.user {
    padding: 0 13px 0 2px;
    border-left: 1px solid #555;
}
.bars {
    width: 9px;
    height: 18px;
    margin-right: 12px;
    background: repeating-linear-gradient(90deg, #777 0 1px, transparent 1px 4px);
}
```
